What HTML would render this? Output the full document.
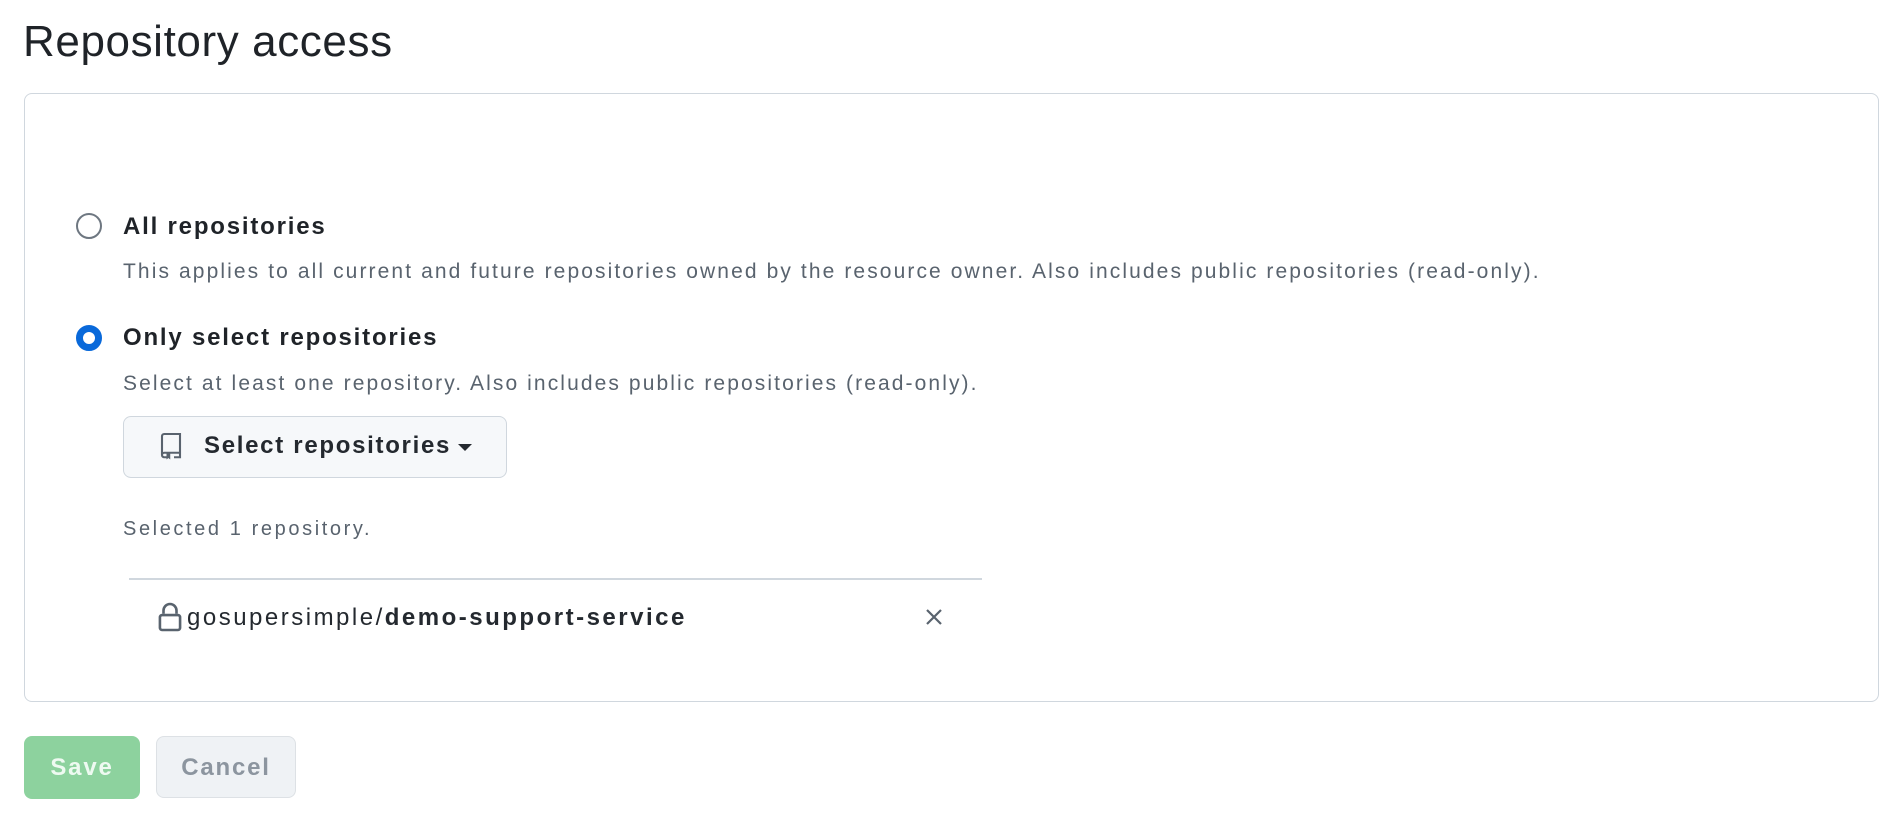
<!DOCTYPE html>
<html><head><style>
body{margin:0;width:1902px;height:828px;background:#fff;font-family:"Liberation Sans",sans-serif;color:#1f2328;position:relative;overflow:hidden}
.a{position:absolute;white-space:nowrap}
.t{left:23px;top:16px;font-size:44px;line-height:52px;letter-spacing:0.6px}
.box{left:24px;top:93px;width:1853px;height:607px;border:1.5px solid #d0d7de;border-radius:8px}
.lbl{font-size:24px;font-weight:bold;line-height:30px;letter-spacing:1.8px}
.d{font-size:21px;color:#59636e;line-height:26px;letter-spacing:2.1px}
.r{width:26px;height:26px;border-radius:50%;box-sizing:border-box}
.btn{left:123px;top:416px;width:382px;height:60px;border:1.5px solid #d0d7de;border-radius:8px;background:#f6f8fa}
</style></head><body>
<div class="a t">Repository access</div>
<div class="a box"></div>
<div class="a r" style="left:76px;top:213px;border:2px solid #6e7781"></div>
<div class="a lbl" style="left:123px;top:212px">All repositories</div>
<div class="a d" style="left:123px;top:259px">This applies to all current and future repositories owned by the resource owner. Also includes public repositories (read-only).</div>
<div class="a r" style="left:76px;top:325px;border:7px solid #0969da"></div>
<div class="a lbl" style="left:123px;top:323px">Only select repositories</div>
<div class="a d" style="left:123px;top:371px">Select at least one repository. Also includes public repositories (read-only).</div>
<div class="a btn"></div>
<svg class="a" style="left:159px;top:432px" width="24" height="28" viewBox="0 0 16 18"><path d="M2 2.5A1.5 1.5 0 0 1 3.5 1H14v12.5H3.5A1.5 1.5 0 0 0 2 15V2.5zM2 15a1.5 1.5 0 0 0 1.5 1.5H5M14 13.5V16.5H10" fill="none" stroke="#59636e" stroke-width="1.4"/><path d="M5 14v4l1.25-1 1.25 1v-4z" fill="#59636e"/></svg>
<div class="a" style="left:204px;top:431px;font-size:24px;font-weight:bold;line-height:30px;color:#24292f;letter-spacing:1.7px">Select repositories</div>
<div class="a" style="left:458px;top:444px;width:0;height:0;border-left:7px solid transparent;border-right:7px solid transparent;border-top:7px solid #24292f"></div>
<div class="a d" style="left:123px;top:516px;font-size:20px;letter-spacing:2.6px">Selected 1 repository.</div>
<div class="a" style="left:129px;top:578px;width:853px;height:2px;background:#d0d7de"></div>
<svg class="a" style="left:157px;top:602px" width="26" height="30" viewBox="0 0 16 18"><path d="M4 7V5a4 4 0 0 1 8 0v2" fill="none" stroke="#59636e" stroke-width="1.6"/><rect x="1.8" y="7.8" width="12.4" height="9.2" rx="1.3" fill="none" stroke="#59636e" stroke-width="1.6"/></svg>
<div class="a" style="left:187px;top:603px;font-size:24px;line-height:30px;color:#24292f;letter-spacing:2.5px">gosupersimple/<b>demo-support-service</b></div>
<svg class="a" style="left:924px;top:607px" width="20" height="20" viewBox="0 0 20 20"><path d="M3 3L17 17M17 3L3 17" stroke="#59636e" stroke-width="2.2"/></svg>
<div class="a" style="left:24px;top:736px;width:116px;height:63px;background:#8dd29e;border-radius:8px;color:#eefaf1;font-size:24px;font-weight:bold;text-align:center;line-height:63px;letter-spacing:1.8px">Save</div>
<div class="a" style="left:156px;top:736px;width:140px;height:62px;background:#eff2f5;border:1.5px solid #dde1e5;border-radius:8px;color:#8c959f;font-size:24px;font-weight:bold;text-align:center;line-height:62px;box-sizing:border-box;letter-spacing:1.8px">Cancel</div>
</body></html>
